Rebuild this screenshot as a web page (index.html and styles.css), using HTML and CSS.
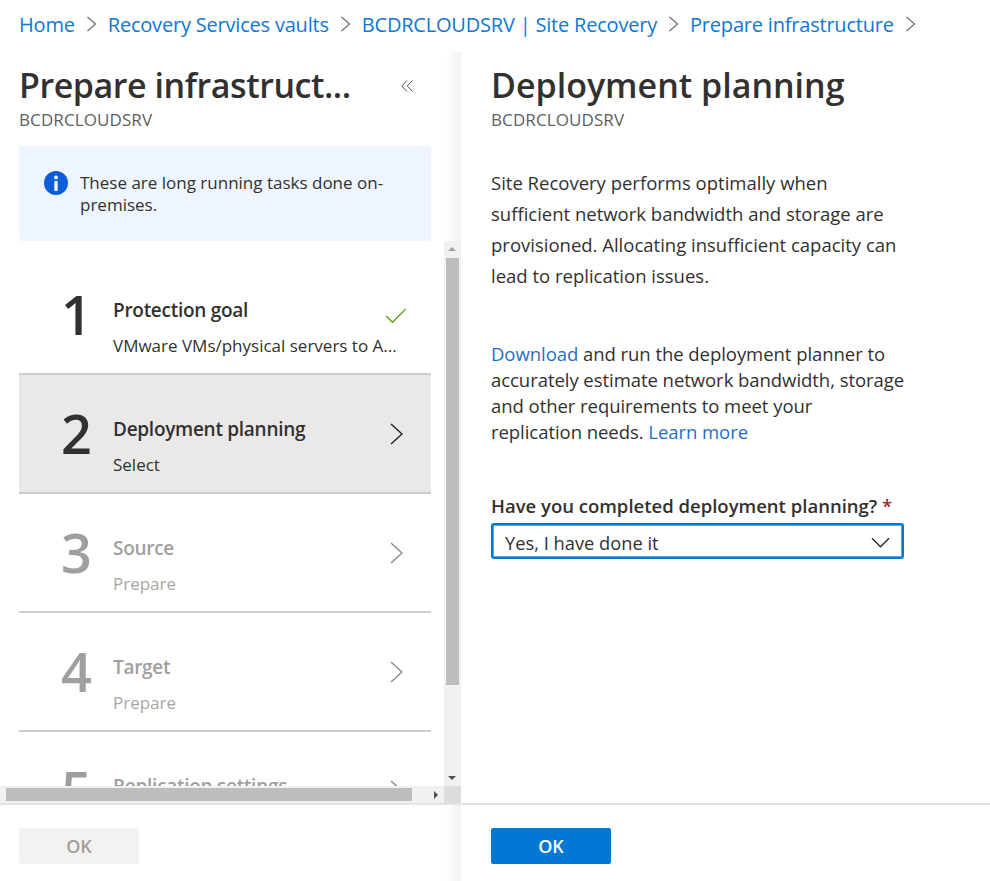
FILE: index.html
```html
<!DOCTYPE html>
<html lang="en">
<head>
    <meta charset="UTF-8">
    <title>Deployment planning</title>
    <link rel="stylesheet" href="styles.css">
</head>
<body>

<nav class="breadcrumb">
    <a>Home</a>
    <svg class="crumb-sep" viewBox="0 0 10 16"><path d="M1 1l8 7-8 7"/></svg>
    <a>Recovery Services vaults</a>
    <svg class="crumb-sep" viewBox="0 0 10 16"><path d="M1 1l8 7-8 7"/></svg>
    <a>BCDRCLOUDSRV | Site Recovery</a>
    <svg class="crumb-sep" viewBox="0 0 10 16"><path d="M1 1l8 7-8 7"/></svg>
    <a>Prepare infrastructure</a>
    <svg class="crumb-sep" viewBox="0 0 10 16"><path d="M1 1l8 7-8 7"/></svg>
</nav>

<div class="blades">
    <section class="blade blade-left">
        <div class="blade-main">
            <div class="title-row">
                <h1>Prepare infrastruct...</h1>
                <svg class="collapse" viewBox="0 0 12 12"><path d="M6 .5L.8 6l5.2 5.5M11.500 .5L6.300 6l5.200 5.500"/></svg>
            </div>
            <div class="subtitle">BCDRCLOUDSRV</div>

            <div class="info-box">
                <svg class="info-icon" viewBox="0 0 24 24">
                    <circle cx="12" cy="12" r="12" fill="#0b5ed7"/>
                    <circle cx="12" cy="6.500" r="1.900" fill="#fff"/>
                    <rect x="10.400" y="10" width="3.200" height="10" fill="#fff"/>
                </svg>
                <p>These are long running tasks done on-premises.</p>
            </div>

            <div class="steps">
                <div class="step">
                    <div class="step-num">1</div>
                    <div class="step-text">
                        <div class="step-title">Protection goal</div>
                        <div class="step-sub">VMware VMs/physical servers to A...</div>
                    </div>
                    <svg class="step-check" viewBox="0 0 24 18"><path d="M1 9l7 7L23 1"/></svg>
                </div>
                <div class="step step-active">
                    <div class="step-num">2</div>
                    <div class="step-text">
                        <div class="step-title">Deployment planning</div>
                        <div class="step-sub">Select</div>
                    </div>
                    <svg class="step-arrow" viewBox="0 0 13 22"><path d="M1 1l11 10L1 21"/></svg>
                </div>
                <div class="step step-off">
                    <div class="step-num">3</div>
                    <div class="step-text">
                        <div class="step-title">Source</div>
                        <div class="step-sub">Prepare</div>
                    </div>
                    <svg class="step-arrow" viewBox="0 0 13 22"><path d="M1 1l11 10L1 21"/></svg>
                </div>
                <div class="step step-off">
                    <div class="step-num">4</div>
                    <div class="step-text">
                        <div class="step-title">Target</div>
                        <div class="step-sub">Prepare</div>
                    </div>
                    <svg class="step-arrow" viewBox="0 0 13 22"><path d="M1 1l11 10L1 21"/></svg>
                </div>
                <div class="step step-off">
                    <div class="step-num">5</div>
                    <div class="step-text">
                        <div class="step-title">Replication settings</div>
                        <div class="step-sub">Prepare</div>
                    </div>
                    <svg class="step-arrow" viewBox="0 0 13 22"><path d="M1 1l11 10L1 21"/></svg>
                </div>
            </div>

            <!-- fake scrollbars, they sit over the list -->
            <div class="vbar">
                <span class="vbar-up"></span>
                <div class="vbar-thumb"></div>
                <span class="vbar-down"></span>
            </div>
            <div class="hbar">
                <div class="hbar-thumb"></div>
                <span class="hbar-right"></span>
            </div>
            <div class="bar-corner"></div>
        </div>
        <div class="blade-foot">
            <button class="btn btn-off">OK</button>
        </div>
    </section>

    <section class="blade blade-right">
        <div class="blade-main">
            <h1>Deployment planning</h1>
            <div class="subtitle">BCDRCLOUDSRV</div>

            <p class="intro">Site Recovery performs optimally when sufficient network bandwidth and storage are provisioned. Allocating insufficient capacity can lead to replication issues.</p>

            <p class="desc"><a>Download</a> and run the deployment planner to accurately estimate network bandwidth, storage and other requirements to meet your<br>replication needs. <a>Learn more</a></p>

            <label class="field-label">Have you completed deployment planning? <span class="req">*</span></label>
            <div class="select">
                <span>Yes, I have done it</span>
                <svg viewBox="0 0 20 11"><path d="M1 1l9 9 9-9"/></svg>
            </div>
        </div>
        <div class="blade-foot">
            <button class="btn btn-primary">OK</button>
        </div>
    </section>
</div>

</body>
</html>
```

FILE: styles.css
```css
html, body {
    margin: 0;
    padding: 0;
    height: 881px;
    overflow: hidden;
}
body {
    font-family: "Open Sans", "Noto Sans", sans-serif;
    color: #323130;
    background: #fff;
}
h1 {
    margin: 0 0 1px;
    font-size: 34px;
    line-height: 46px;
    font-weight: 600;
    color: #323130;
}
.breadcrumb {
    height: 52px;
    display: flex;
    align-items: center;
    gap: 11px;
    padding: 0 0 4px 19px;
    box-sizing: border-box;
    font-size: 20px;
    letter-spacing: -0.2px;
}
.breadcrumb a {
    color: #0f78d4;
}
.crumb-sep {
    width: 11px;
    height: 16px;
    fill: none;
    stroke: #6d6d6d;
    stroke-width: 1.200;
}
.blades {
    display: flex;
    height: 829px;
}
.blade {
    display: flex;
    flex-direction: column;
    box-sizing: border-box;
}
.blade-left {
    width: 461px;
    background: linear-gradient(to right, #fff 446px, #f2f2f2 461px);
}
.blade-right {
    flex: 1;
}
.blade-main {
    position: relative;
    height: 751px;
    box-sizing: border-box;
    padding: 10px 0 0 19px;
}
.blade-right .blade-main {
    padding-left: 30px;
}
.blade-foot {
    height: 78px;
    border-top: 2px solid #e3e3e3;
    box-sizing: border-box;
    padding: 23px 0 0 19px;
}
.blade-right .blade-foot {
    padding-left: 30px;
}
.title-row {
    width: 394px;
    display: flex;
    align-items: center;
    justify-content: space-between;
}
.title-row h1 {
    letter-spacing: -0.45px;
}
.collapse {
    width: 12px;
    height: 12px;
    fill: none;
    stroke: #555;
    stroke-width: 1;
}
.subtitle {
    font-size: 17px;
    line-height: 22px;
    letter-spacing: 0.1px;
    color: #605e5c;
}
.info-box {
    width: 412px;
    height: 95px;
    margin-top: 15px;
    box-sizing: border-box;
    display: flex;
    gap: 12px;
    padding: 25px 20px 0 25px;
    background: #eef5fe;
    border-radius: 3px;
}
.info-icon {
    width: 24px;
    height: 24px;
    flex: none;
}
.info-box p {
    margin: 1px 0 0;
    font-size: 17px;
    line-height: 22px;
    width: 330px;
}
.steps {
    width: 412px;
    height: 545px;
    overflow: hidden;
    padding-top: 15px;
    box-sizing: border-box;
}
.step {
    height: 119px;
    box-sizing: border-box;
    border-bottom: 2px solid #cfcdcc;
    display: flex;
    align-items: flex-start;
    position: relative;
}
.step-num {
    width: 94px;
    flex: none;
    box-sizing: border-box;
    padding: 20px 0 0 42px;
    font-size: 54px;
    line-height: 76px;
    font-weight: 600;
    color: #323130;
}
.step-text {
    padding-top: 41px;
    width: 290px;
}
.step-title {
    font-size: 19px;
    line-height: 26px;
    font-weight: 600;
    letter-spacing: -0.28px;
    white-space: nowrap;
}
.step-sub {
    font-size: 17px;
    line-height: 24px;
    margin-top: 11px;
    white-space: nowrap;
}
.step-active {
    background: #ebe9e8;
}
.step-off .step-num,
.step-off .step-title,
.step-off .step-sub {
    color: #a19f9d;
}
.step-off .step-sub {
    color: #a8a6a4;
}
.step-check {
    width: 22px;
    height: 16px;
    fill: none;
    stroke: #57a300;
    stroke-width: 1.500;
    position: absolute;
    left: 366px;
    top: 52px;
}
.step-arrow {
    width: 13px;
    height: 22px;
    fill: none;
    stroke: #222;
    stroke-width: 1.400;
    position: absolute;
    left: 371px;
    top: 48px;
}
.step-off .step-arrow {
    stroke: #8a8886;
}
.vbar {
    position: absolute;
    left: 444px;
    top: 189px;
    width: 17px;
    height: 545px;
    background: #f1f1f1;
}
.vbar-thumb {
    position: absolute;
    left: 2px;
    top: 17px;
    width: 13px;
    height: 427px;
    background: #bdbdbd;
}
.vbar-up,
.vbar-down {
    position: absolute;
    left: 4px;
    width: 0;
    height: 0;
    border-left: 4px solid transparent;
    border-right: 4px solid transparent;
}
.vbar-up {
    top: 6px;
    border-bottom: 4px solid #a3a3a3;
}
.vbar-down {
    bottom: 6px;
    border-top: 4px solid #505050;
}
.hbar {
    position: absolute;
    left: 0;
    top: 734px;
    width: 444px;
    height: 17px;
    background: #f1f1f1;
}
.hbar-thumb {
    position: absolute;
    left: 6px;
    top: 2px;
    width: 406px;
    height: 13px;
    background: #bdbdbd;
}
.hbar-right {
    position: absolute;
    left: 434px;
    top: 5px;
    border-top: 4px solid transparent;
    border-bottom: 4px solid transparent;
    border-left: 4px solid #505050;
}
.bar-corner {
    position: absolute;
    left: 444px;
    top: 734px;
    width: 17px;
    height: 17px;
    background: #dcdcdc;
}
.intro {
    margin: 36px 0 0;
    width: 415px;
    font-size: 18.500px;
    line-height: 31px;
}
.desc {
    margin: 50px 0 0;
    width: 420px;
    font-size: 18.500px;
    line-height: 26px;
    letter-spacing: -0.05px;
}
.desc a {
    color: #1f6fc4;
}
.field-label {
    display: block;
    margin-top: 49px;
    font-size: 18.500px;
    line-height: 24px;
    font-weight: 600;
}
.req {
    color: #a4262c;
}
.select {
    width: 413px;
    height: 36px;
    margin-top: 5px;
    box-sizing: border-box;
    border: 2px solid #0078d4;
    box-shadow: inset 0 0 0 1px #55a5e6;
    border-radius: 3px;
    display: flex;
    align-items: center;
    justify-content: space-between;
    padding: 2px 12px 0;
    font-size: 18.300px;
}
.select svg {
    width: 19px;
    height: 11px;
    fill: none;
    stroke: #222;
    stroke-width: 1.300;
}
.btn {
    width: 120px;
    height: 36px;
    border: none;
    border-radius: 2px;
    font-family: inherit;
    font-size: 18px;
    font-weight: 600;
    padding: 0;
}
.btn-off {
    background: #f3f2f1;
    color: #a19f9d;
}
.btn-primary {
    background: #0078d4;
    color: #fff;
}
```
